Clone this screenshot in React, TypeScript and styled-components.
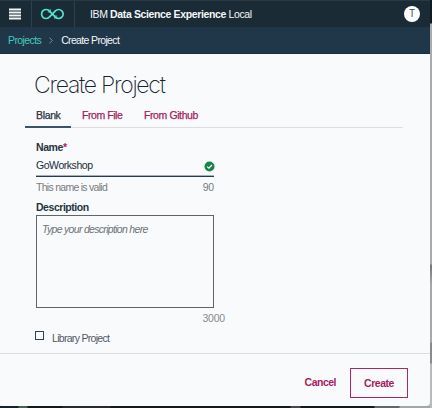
import React from "react";
import styled, { createGlobalStyle } from "styled-components";

const GlobalStyle = createGlobalStyle`
  * { box-sizing: border-box; }
  body { margin: 0; overflow: hidden; font-family: "Liberation Sans", Arial, sans-serif; }
  button, input, textarea { font: inherit; margin: 0; padding: 0; border: 0; background: none; }
`;

const Desktop = styled.div`
  width: 432px;
  height: 408px;
  padding: 0 2px 2px 0;
  background:
    linear-gradient(90deg, #182128 0 18px, #426553 19px 27px, #12191d 28px 62px, #262a2c 63px 110px, #12181b 111px 290px, #45484a 291px 300px, #15191c 301px 374px, #62666a 375px 399px, #a4a7a8 400px) 0 406px / 430px 2px no-repeat,
    linear-gradient(180deg, #101a20 0 23px, #aaabac 24px 264px, #77797b 265px 267px, #a6a8a9 285px 342px, #888a8b 343px 363px, #b8babb 364px);
`;

const Window = styled.div`
  width: 430px;
  height: 406px;
  display: flex;
  flex-direction: column;
  background: #f9fafc;
  border-radius: 0 0 4px 1px;
  overflow: hidden;
`;

const TopBar = styled.header`
  height: 27px;
  flex: none;
  display: flex;
  align-items: center;
  background: #1a2b35;
  border-top: 1px solid #263944;
`;

const BarCell = styled.div<{ $width: number }>`
  width: ${(p) => p.$width}px;
  height: 26px;
  display: flex;
  align-items: center;
  justify-content: center;
  padding-right: 1px;
  border-right: 1px solid #2b414e;
`;

const Label = styled.span<{ $size?: number; $spacing?: number; $color?: string; $bold?: boolean }>`
  font-size: ${(p) => p.$size ?? 10.5}px;
  letter-spacing: ${(p) => p.$spacing ?? 0}px;
  color: ${(p) => p.$color ?? "#26333d"};
  font-weight: ${(p) => (p.$bold ? 700 : 400)};
  line-height: 14px;
  white-space: nowrap;
`;

const TabLabel = styled(Label)`
  -webkit-text-stroke: 0.25px currentColor;
`;

const Brand = styled(Label)`
  flex: 1;
  padding-left: 15px;
`;

const Avatar = styled.div`
  width: 16px;
  height: 16px;
  margin-right: 10px;
  border-radius: 50%;
  background: #fff;
  color: #365064;
  font-size: 10px;
  line-height: 16px;
  text-align: center;
`;

const Breadcrumb = styled.nav`
  height: 27px;
  flex: none;
  display: flex;
  align-items: center;
  padding-left: 8px;
  background: #203649;
  border-bottom: 1px solid #1a3040;
`;

const Chevron = styled.svg`
  margin: 0 7px 0 7px;
`;

const Content = styled.main`
  height: 299px;
  flex: none;
  padding: 17px 27px 0 36px;
`;

const Title = styled.h1`
  height: 29px;
  margin: 0 0 0 -2px;
  font-family: Inter, "Liberation Sans", sans-serif;
  font-weight: 200;
  font-size: 23px;
  line-height: 29px;
  letter-spacing: -1.25px;
  color: #14232f;
  white-space: nowrap;
`;

const Tabs = styled.div`
  height: 28px;
  margin-left: -11px;
  display: flex;
  border-bottom: 1px solid #dddfe1;
`;

const Tab = styled.button<{ $width: number; $active?: boolean }>`
  width: ${(p) => p.$width}px;
  height: 28px;
  padding: 7px 0 5px 11px;
  text-align: left;
  line-height: 14px;
  border-bottom: 2px solid ${(p) => (p.$active ? "#3b5268" : "transparent")};
`;

const Form = styled.form`
  width: 178px;
  display: flex;
  flex-direction: column;
`;

const FieldLabel = styled.label`
  display: flex;
  height: 14px;
`;

const NameGroup = styled.div`
  padding-top: 12px;
`;

const NameRow = styled.div`
  height: 19px;
  display: flex;
  justify-content: space-between;
  margin-top: 4px;
  border-bottom: 1px solid #263c4c;
  box-shadow: inset 0 -1px #a7b0b8;
`;

const ValidMark = styled.svg`
  margin: 3px -1px 0 0;
`;

const Hint = styled.div`
  height: 23px;
  display: flex;
  justify-content: space-between;
  padding-top: 3px;
`;

const Description = styled.textarea`
  width: 178px;
  height: 93px;
  margin-top: 1px;
  padding: 6px 5px;
  border: 1px solid #606467;
  outline: 0;
  resize: none;
  overflow: hidden;
  color: #26333d;
  font-size: 10.5px;
  line-height: 14px;
  letter-spacing: -0.69px;

  &::placeholder { color: #6d7276; font-style: italic; opacity: 1; }
`;

const Counter = styled.div`
  height: 18px;
  margin: 3px -11px 0 0;
  display: flex;
  justify-content: flex-end;
`;

const CheckRow = styled.label`
  display: flex;
  align-items: flex-end;
  gap: 8px;
  height: 16px;
`;

const Checkbox = styled.input`
  appearance: none;
  width: 9px;
  height: 9px;
  margin: 0 0 5px -1px;
  border: 1px solid #2c4356;
`;

const Footer = styled.footer`
  flex: 1;
  display: flex;
  justify-content: flex-end;
  padding: 14px 22px 0 0;
  border-top: 1px solid #d9dbdd;
`;

const Cancel = styled.button`
  height: 26px;
  margin-right: 14px;
`;

const Create = styled.button`
  width: 58px;
  height: 30px;
  padding-bottom: 2px;
  border: 1px solid #ad2467;
`;

function NameField() {
  return (
    <NameGroup>
      <FieldLabel>
        <Label $bold $spacing={-0.4}>Name</Label>
        <Label $bold $color="#b31a66">*</Label>
      </FieldLabel>
      <NameRow>
        <Label $color="#182c3a" $spacing={-0.45}>GoWorkshop</Label>
        <ValidMark width="11" height="11" viewBox="0 0 11 11">
          <circle cx="5.5" cy="5.5" r="5" fill="#168647" />
          <path d="m3.2 5.6 1.7 1.6 3-3.2" fill="none" stroke="#fff" strokeWidth="1.3" />
        </ValidMark>
      </NameRow>
      <Hint>
        <Label $color="#777c80" $spacing={-0.72}>This name is valid</Label>
        <Label $color="#777c80" $spacing={-0.2}>90</Label>
      </Hint>
    </NameGroup>
  );
}

export default function App() {
  return (
    <>
      <GlobalStyle />
      <Desktop>
        <Window>
          <TopBar>
            <BarCell $width={32}>
              <svg width="12" height="12" viewBox="0 0 12 12" fill="none" stroke="#f2f6f7" strokeWidth="1.8">
                <path d="M0 1.5h12M0 4.5h12M0 7.5h12M0 10.5h12" />
              </svg>
            </BarCell>
            <BarCell $width={43}>
              <svg width="27" height="12" viewBox="0 0 27 12" fill="none" stroke="#50e3ce" strokeWidth="1.7">
                <path d="M16.4 9.1 10.6 3.2A4.5 4.5 0 1 0 10.6 8.8L16.4 2.9A4.5 4.5 0 1 1 16.4 9.1" />
                <path d="M11.2 1.2v2.7H8.8M15.8 10.8V8.1h2.4" strokeWidth="1" />
              </svg>
            </BarCell>
            <Brand $color="#f5f7f8" $spacing={-0.37}>
              IBM <b>Data Science Experience</b> Local
            </Brand>
            <Avatar>T</Avatar>
          </TopBar>
          <Breadcrumb>
            <Label $color="#40cbbd" $spacing={-0.6}>Projects</Label>
            <Chevron width="6" height="7" viewBox="0 0 6 7" fill="none" stroke="#8294a1">
              <path d="M1.5 .7 4.3 3.5 1.5 6.3" />
            </Chevron>
            <Label $color="#f3f6f8" $spacing={-0.65}>Create Project</Label>
          </Breadcrumb>
          <Content>
            <Title>Create Project</Title>
            <Tabs>
              <Tab $width={46} $active><TabLabel $spacing={-0.35}>Blank</TabLabel></Tab>
              <Tab $width={62}><TabLabel $color="#a51c60" $spacing={-0.45}>From File</TabLabel></Tab>
              <Tab $width={90}><TabLabel $color="#a51c60" $spacing={-0.4}>From Github</TabLabel></Tab>
            </Tabs>
            <Form>
              <NameField />
              <FieldLabel><Label $bold $spacing={-0.46}>Description</Label></FieldLabel>
              <Description placeholder="Type your description here" />
              <Counter><Label $color="#858a8e" $spacing={-0.2}>3000</Label></Counter>
              <CheckRow>
                <Checkbox type="checkbox" />
                <Label $color="#525866" $spacing={-0.7}>Library Project</Label>
              </CheckRow>
            </Form>
          </Content>
          <Footer>
            <Cancel type="button"><Label $bold $color="#a51c60" $spacing={-0.5}>Cancel</Label></Cancel>
            <Create type="button"><Label $bold $color="#a51c60" $spacing={-0.45}>Create</Label></Create>
          </Footer>
        </Window>
      </Desktop>
    </>
  );
}
